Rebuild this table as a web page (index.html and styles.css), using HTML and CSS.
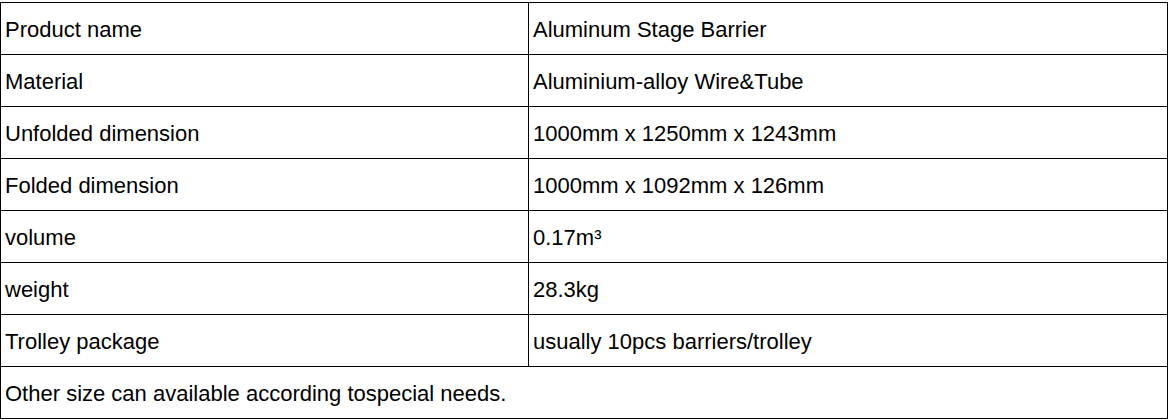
FILE: index.html
```html
<!DOCTYPE html>
<html>
<head>
<meta charset="utf-8">
<link rel="stylesheet" href="styles.css">
</head>
<body>
<table class="spec">
  <tr><td class="c1">Product name</td><td class="c2">Aluminum Stage Barrier</td></tr>
  <tr><td class="c1">Material</td><td class="c2">Aluminium-alloy Wire&amp;Tube</td></tr>
  <tr><td class="c1">Unfolded dimension</td><td class="c2">1000mm x 1250mm x 1243mm</td></tr>
  <tr><td class="c1">Folded dimension</td><td class="c2">1000mm x 1092mm x 126mm</td></tr>
  <tr><td class="c1">volume</td><td class="c2">0.17m³</td></tr>
  <tr><td class="c1">weight</td><td class="c2">28.3kg</td></tr>
  <tr><td class="c1">Trolley package</td><td class="c2">usually 10pcs barriers/trolley</td></tr>
  <tr><td class="full" colspan="2">Other size can available according tospecial needs.</td></tr>
</table>
</body>
</html>
```
FILE: styles.css
```css
html, body {
  margin: 0;
  padding: 0;
  background: #fff;
}
body {
  padding-top: 2px;
}
.spec {
  border-collapse: collapse;
  width: 1168px;
  font-family: "Liberation Sans", Arial, sans-serif;
  font-size: 22px;
  color: #000;
}
.spec td {
  border: 1px solid #000;
  height: 52px;
  padding: 2px 4px 0;
  vertical-align: middle;
  box-sizing: border-box;
  line-height: 1.15;
}
.c1 {
  width: 528px;
}
```
